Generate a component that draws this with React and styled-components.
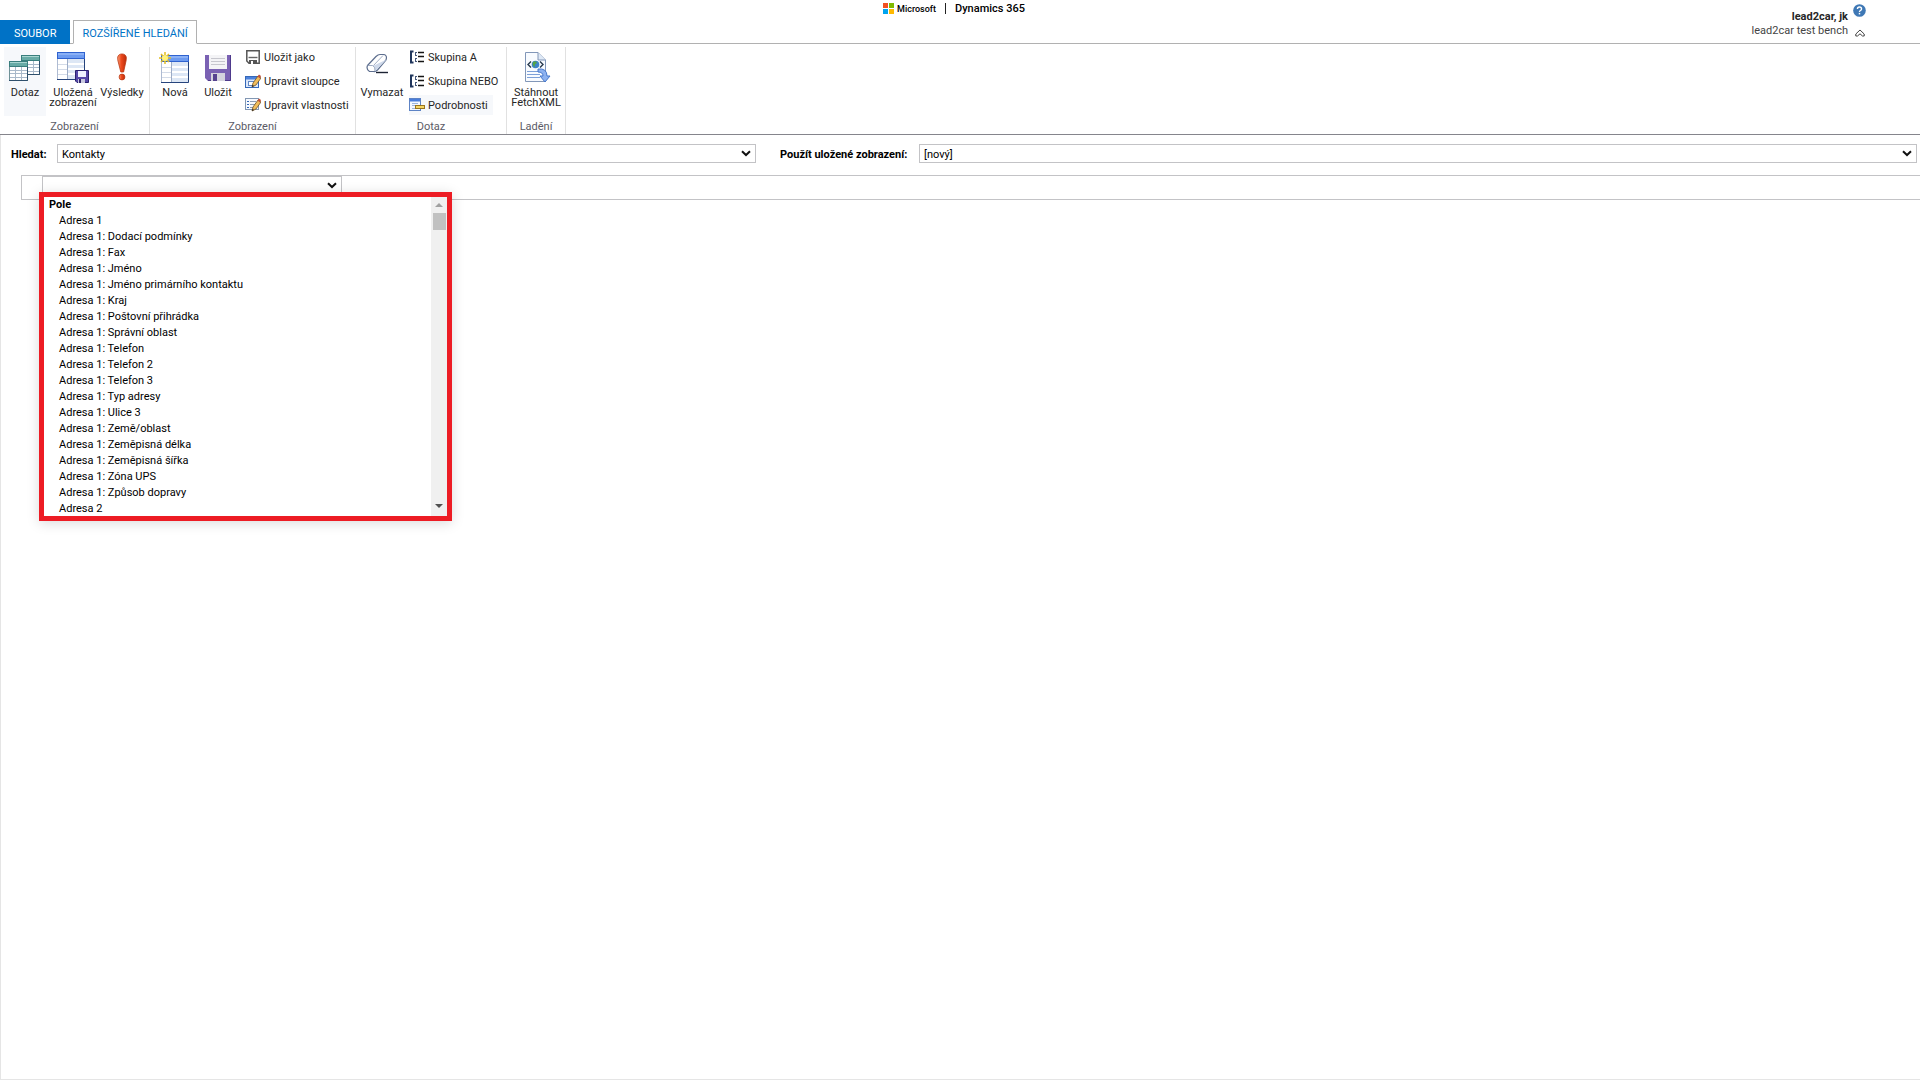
import React from "react";
import styled, { createGlobalStyle, css } from "styled-components";

const GlobalStyle = createGlobalStyle`
  *, *::before, *::after { box-sizing: border-box; }
  html, body, #root { height: 100%; }
  body {
    margin: 0;
    background: #fff;
    color: #000;
    font-family: Roboto, "Open Sans", sans-serif;
    font-size: 11px;
    line-height: 16px;
  }
  button, select { font: inherit; color: inherit; }
`;

const Page = styled.div`
  display: flex;
  flex-direction: column;
  min-height: 100%;
`;

const TopBar = styled.header`
  display: grid;
  grid-template-columns: 1fr auto 1fr;
  height: 44px;
  border-bottom: 1px solid #b1b1b1;
`;

const Tabs = styled.nav`
  display: flex;
  align-items: flex-end;
  gap: 3px;
  margin-bottom: -1px;
`;

const Tab = styled.button`
  height: 24px;
  padding: 4px 8px 0;
  border: 1px solid #b1b1b1;
  border-bottom-color: #fff;
  background: #fff;
  color: #0072c6;
  white-space: nowrap;
  ${(p) =>
    p.$primary &&
    css`
      padding: 3px 13px 0;
      border-color: #0072c6;
      background: #0072c6;
      color: #fff;
    `}
`;

const Brand = styled.div`
  display: flex;
  align-items: center;
  height: 17px;
  margin-right: 12px;
  white-space: nowrap;
`;

const Company = styled.span`
  margin-left: 3px;
  font-size: 9px;
  font-weight: 500;
`;

const Divider = styled.span`
  width: 1px;
  height: 11px;
  margin: 0 9px;
  background: #222;
`;

const Product = styled.span`
  font-weight: 500;
`;

const Account = styled.div`
  display: flex;
  justify-content: flex-end;
  gap: 5px;
  padding-right: 54px;
`;

const Identity = styled.div`
  padding-top: 10px;
  text-align: right;
  line-height: 14px;
  color: #444;
`;

const UserName = styled.div`
  font-weight: 700;
  color: #262626;
`;

const AccountActions = styled.div`
  display: flex;
  flex-direction: column;
  align-items: center;
  gap: 12px;
  padding-top: 4px;
`;

const IconButton = styled.button`
  display: flex;
  padding: 0;
  border: 0;
  background: none;
`;

const Ribbon = styled.div`
  display: flex;
  height: 91px;
  border-bottom: 1px solid #85858c;
`;

const Group = styled.section`
  display: flex;
  flex-direction: column;
  align-items: center;
  justify-content: space-between;
  flex: none;
  width: ${(p) => p.$width}px;
  margin-top: 3px;
  border-right: 1px solid #e1e1e1;
`;

const Commands = styled.div`
  display: flex;
  width: 100%;
  padding-left: 4px;
`;

const GroupName = styled.div`
  height: 16px;
  line-height: 18px;
  color: #5b5b66;
`;

const BigButton = styled.button`
  display: flex;
  flex-direction: column;
  align-items: center;
  flex: none;
  width: ${(p) => p.$width}px;
  height: 69px;
  padding: 4px 0 0;
  border: 0;
  background: ${(p) => (p.$active ? "#f6f8fb" : "none")};
  color: #262626;
  line-height: 10px;
  white-space: nowrap;

  svg { margin-bottom: 5px; flex: none; }
`;

const SmallList = styled.div`
  display: flex;
  flex-direction: column;
  align-items: flex-start;
  gap: 4px;
  padding-left: ${(p) => p.$indent}px;
`;

const SmallButton = styled.button`
  display: flex;
  align-items: center;
  gap: 3px;
  height: 20px;
  padding: 0 5px 0 0;
  border: 0;
  background: ${(p) => (p.$active ? "#f6f8fb" : "none")};
  color: #262626;
  line-height: 20px;
  white-space: nowrap;

  span { padding-top: 2px; }
`;

const Content = styled.main`
  flex: 1;
  padding-top: 9px;
  border-left: 1px solid #e5e5e5;
  border-bottom: 1px solid #e5e5e5;
`;

const Filters = styled.div`
  display: grid;
  grid-template-columns: 46px 699fr 24px 139px 998fr;
  align-items: center;
  padding: 0 3px 0 10px;
`;

const FilterLabel = styled.label`
  grid-column: ${(p) => p.$column};
  padding-top: 2px;
  font-weight: 700;
  white-space: nowrap;
`;

const SelectBox = styled.div`
  position: relative;
  min-width: 0;

  svg { position: absolute; right: 5px; top: 6px; pointer-events: none; }
`;

const Select = styled.select`
  display: block;
  width: 100%;
  height: ${(p) => p.$height || 19}px;
  padding: 2px 24px 0 4px;
  border: 1px solid #c3c3c6;
  border-radius: 0;
  background: #fff;
  appearance: none;
  outline: none;
`;

const QueryRow = styled.div`
  display: flex;
  height: 25px;
  margin: 12px 0 0 20px;
  padding-left: 20px;
  border: 1px solid #c3c3c6;
  border-right: 0;
`;

const FieldPicker = styled.div`
  position: relative;
  width: 300px;
`;

const Popup = styled.div`
  position: absolute;
  top: 16px;
  left: -3px;
  display: flex;
  width: 413px;
  height: 329px;
  border: 5px solid #ed1c24;
  background: #fff;
  box-shadow: 0 2px 12px rgba(0, 0, 0, 0.15);
`;

const Options = styled.ul`
  flex: 1;
  margin: 0;
  padding: 0 0 0 5px;
  overflow: hidden;
  list-style: none;
  white-space: nowrap;
`;

const OptionGroup = styled.li`
  height: 16px;
  font-weight: 700;
`;

const Option = styled.li`
  height: 16px;
  padding-left: 10px;
`;

const ScrollTrack = styled.div`
  display: flex;
  flex-direction: column;
  align-items: center;
  width: 16px;
  padding: 5px 0 7px;
  background: #f0f0f0;
`;

const ScrollThumb = styled.div`
  width: 13px;
  height: 17px;
  margin: 6px 0 auto;
  background: #c1c1c1;
`;

const Chevron = () => (
  <svg width="10" height="7" viewBox="0 0 10 7">
    <path d="M1 1.2 5 5 9 1.2" fill="none" stroke="#111" strokeWidth="2" />
  </svg>
);

const Table = ({ x, y, w, h }) => {
  const col = Math.round(w * 0.36) + 0.5;
  return (
    <g transform={`translate(${x} ${y})`}>
      <rect width={w} height={h} fill="#fff" />
      <path d={`M${col} 7H${w}V${h}H${col}z`} fill="#dde7f5" />
      <path d={`M1 12H${w}M1 17H${w}M1 22H${w}`} stroke="#fff" strokeWidth="2" />
      <path d={`M1 12.5H${col}M1 17.5H${col}M1 22.500H${col}`} stroke="#d3dbe8" />
      <rect x=".5" y=".5" width={w - 1} height="6" fill="#6d9bf0" stroke="#2f62cf" />
      <path d={`M1 2H${w - 1}`} stroke="#a9c6fb" />
      <path d={`M${col} 7V${h}`} stroke="#9dacc6" />
      <path d={`M.5 7V${h - 0.5}`} stroke="#aebbd2" />
      <path d={`M0 ${h - 0.5}H${w - 0.5}V7`} fill="none" stroke="#26447c" />
    </g>
  );
};

const Grid = ({ x, y }) => (
  <g transform={`translate(${x} ${y})`}>
    <rect x=".5" y=".5" width="18" height="19" fill="#fff" stroke="#6f9297" />
    <rect x=".5" y=".5" width="18" height="5" fill="#68aba6" stroke="#397e7d" />
    <path d="M1 1.5H18" stroke="#a9d6d1" />
    <path d="M1 9.5H18M1 12.5H18M1 16.5H18M6.5 6V19M12.5 6V19" stroke="#a9b9ca" />
    <path d="M0 19.5H18.5V6" fill="none" stroke="#2f506c" />
  </g>
);

const QueryIcon = () => (
  <svg width="32" height="32"><Grid x={12} y={4} /><Grid x={0} y={10} /></svg>
);

const SavedViewsIcon = () => (
  <svg width="32" height="32">
    <Table x={0} y={1} w={28} h={28} />
    <path d="M18.500 19.500H31.500V31.500H20L18.500 30z" fill="#5547a8" stroke="#29206f" />
    <rect x="21" y="20" width="8" height="6" fill="#eef0ff" />
    <rect x="21" y="28" width="7" height="4" fill="#c9c8df" />
    <rect x="22" y="28" width="2" height="4" fill="#30266d" />
  </svg>
);

const ResultsIcon = () => (
  <svg width="32" height="32">
    <defs>
      <linearGradient id="alert" x1="0" x2="1">
        <stop offset="0" stopColor="#f9a27b" /><stop offset=".4" stopColor="#ef4a1d" /><stop offset="1" stopColor="#b92c0a" />
      </linearGradient>
    </defs>
    <path d="M16 3C20 3 21 6 20 10L17.6 21H14.8L12 10C11 6 12 3 16 3z" fill="url(#alert)" stroke="#bb3610" strokeWidth=".8" />
    <circle cx="16" cy="26" r="2.9" fill="url(#alert)" stroke="#bb3610" strokeWidth=".8" />
  </svg>
);

const NewIcon = () => (
  <svg width="32" height="32">
    <Table x={2} y={4} w={28} h={28} />
    <path d="M6 1V13M0 7H12M2 3 10 11M10 3 2 11" stroke="#e4be25" strokeWidth="1.5" />
    <circle cx="6" cy="7" r="3" fill="#fff27a" />
  </svg>
);

const SaveIcon = () => (
  <svg width="32" height="32">
    <path d="M3 4H29V30H6L3 27V4z" fill="#7a61b3" />
    <path d="M28.500 4V29.500H6" fill="none" stroke="#4e3a8c" />
    <rect x="7" y="4" width="18" height="14" fill="#f4f4f6" />
    <path d="M9 7.500H23M9 10.500H23M9 13.500H23" stroke="#c7c7ce" />
    <rect x="9" y="22" width="14" height="8" fill="#d4d2de" />
    <rect x="11" y="23" width="4" height="7" fill="#56418f" />
  </svg>
);

const ClearIcon = () => (
  <svg width="32" height="32">
    <path d="M10 21.500H22" stroke="#1c2333" strokeWidth="1.400" />
    <path d="M1.500 14.500 10 5.500Q12 3.500 14 3.500H18Q21.500 4.500 20 9L11.500 19Q9.500 21 7.500 20.500H3.500Q0 18.500 1.500 14.500z" fill="#fff" stroke="#5d6e8e" strokeWidth="1.200" />
    <path d="M1.500 14.800H6.500Q9.500 15.500 9 20.500L20.500 8.500 8 14.500z" fill="#cfd9ea" />
    <path d="M1.500 14.500H6.500Q9.500 15.500 9 20.500M7.500 14.500 17 4.500" fill="none" stroke="#8c9ab5" strokeWidth=".8" />
  </svg>
);

const FetchIcon = () => (
  <svg width="32" height="32">
    <path d="M5.500 1.500H18L25.500 9V30.500H5.500z" fill="#f8fbff" stroke="#8297b8" />
    <path d="M18 1.500V9H25.500" fill="#dfe9f6" stroke="#8297b8" />
    <path d="M11 10.500 8 13.500 11 16.500M20 10.500 23 13.500 20 16.500" fill="none" stroke="#27394d" strokeWidth="1.4" />
    <circle cx="15.500" cy="13.500" r="3.800" fill="#3e83c9" />
    <path d="M13 11Q16 9 17 12Q14 13 15 16Q12 15 13 11z" fill="#54a447" />
    <path d="M7 20.500H20M7 23.500H20M7 26.500H20" stroke="#7da0d8" />
    <path d="M18 18Q27 17 27 25H30L25 31 20 25H23Q23 21 18 21z" fill="#8db2f0" stroke="#4577cc" />
  </svg>
);

const SaveAsIcon = () => (
  <svg width="16" height="16">
    <path d="M2 1.800H14.200V14.200H4L1.800 12V1.800z" fill="#fff" stroke="#555" strokeWidth="1.500" />
    <path d="M3.500 8.500H12.500" fill="none" stroke="#666" strokeWidth="1.400" />
    <path d="M4 14.500V11H12V14.500z" fill="#555" /><rect x="6" y="12" width="2" height="3" fill="#fff" />
  </svg>
);

const Pencil = () => (
  <g>
    <path d="M7 14 8 10 13 3 16 5 11 12z" fill="#f1bd5b" stroke="#705328" strokeWidth=".8" />
    <path d="M12.500 3.500 14 1.500 16 3 15 5.500z" fill="#c2533b" />
    <path d="M7 14 7.600 11.800 9 13z" fill="#222" />
  </g>
);

const EditColumnsIcon = () => (
  <svg width="16" height="16">
    <rect x=".5" y="3.500" width="13" height="11" fill="#dbe7fa" stroke="#3568b8" />
    <rect x="1" y="4" width="12" height="2.500" fill="#4c82dc" />
    <rect x="3.500" y="8.500" width="6" height="4" fill="#fff" stroke="#6188c6" />
    <Pencil />
  </svg>
);

const EditPropsIcon = () => (
  <svg width="16" height="16">
    <rect x=".5" y="1.500" width="13" height="11" fill="#f7faff" stroke="#8297b3" />
    <path d="M5 4.500H11M5 7.500H10M5 10.500H8" stroke="#8e9eb5" />
    <path d="M2 4.500H4M2 7.500H4M2 10.500H4" stroke="#3568b8" />
    <Pencil />
  </svg>
);

const GroupIcon = () => (
  <svg width="16" height="16">
    <path d="M4.500 2.500H2V13.500H4.500" fill="none" stroke="#20365c" strokeWidth="2" />
    <path d="M6.500 3V6.500M8 3.500H6M8 6.500H6M6.500 9V13M8 9.500H6M8 12.500H6" stroke="#46587a" />
    <path d="M9 3.500H15M9 7.500H15M9 12.500H15" stroke="#151515" strokeWidth="1.400" />
  </svg>
);

const DetailsIcon = () => (
  <svg width="16" height="16">
    <rect x=".5" y="1.500" width="11" height="12" fill="#f4f8ff" stroke="#5d83c5" />
    <rect x="1" y="2" width="10" height="2.500" fill="#4a7edb" />
    <path d="M3 6.500H9M3 8.500H7M3 11.500H7" stroke="#9cb5dc" />
    <rect x="6.500" y="8.500" width="9" height="3" fill="#f4d665" stroke="#98741e" />
  </svg>
);

const Small = ({ icon, label, active }) => (
  <SmallButton $active={active}>
    {icon}
    <span>{label}</span>
  </SmallButton>
);

const FIELDS = [
  "Adresa 1", "Adresa 1: Dodací podmínky", "Adresa 1: Fax", "Adresa 1: Jméno",
  "Adresa 1: Jméno primárního kontaktu", "Adresa 1: Kraj", "Adresa 1: Poštovní přihrádka",
  "Adresa 1: Správní oblast", "Adresa 1: Telefon", "Adresa 1: Telefon 2", "Adresa 1: Telefon 3",
  "Adresa 1: Typ adresy", "Adresa 1: Ulice 3", "Adresa 1: Země/oblast", "Adresa 1: Zeměpisná délka",
  "Adresa 1: Zeměpisná šířka", "Adresa 1: Zóna UPS", "Adresa 1: Způsob dopravy", "Adresa 2",
];

export default function App() {
  return (
    <Page>
      <GlobalStyle />
      <TopBar>
        <Tabs>
          <Tab $primary>SOUBOR</Tab>
          <Tab>ROZŠÍŘENÉ HLEDÁNÍ</Tab>
        </Tabs>
        <Brand>
          <svg width="11" height="11">
            <path d="M0 0H5V5H0z" fill="#f25022" /><path d="M6 0H11V5H6z" fill="#7fba00" />
            <path d="M0 6H5V11H0z" fill="#00a4ef" /><path d="M6 6H11V11H6z" fill="#ffb900" />
          </svg>
          <Company>Microsoft</Company>
          <Divider />
          <Product>Dynamics 365</Product>
        </Brand>
        <Account>
          <Identity>
            <UserName>lead2car, jk</UserName>
            <div>lead2car test bench</div>
          </Identity>
          <AccountActions>
            <IconButton aria-label="Nápověda">
              <svg width="13" height="13" viewBox="0 0 14 14">
                <circle cx="7" cy="7" r="6.800" fill="#3f78b5" />
                <path d="M4.800 5.500Q4.800 3.300 7 3.300T9.200 5.300Q9.200 6.300 8 7T7 8.600" fill="none" stroke="#fff" strokeWidth="1.500" />
                <rect x="6.200" y="9.600" width="1.600" height="1.600" fill="#fff" />
              </svg>
            </IconButton>
            <IconButton aria-label="Sbalit pás karet">
              <svg width="10" height="8">
                <path d="M.8 5 5 1 9.200 5V7H7.500L5 4.800 2.500 7H.8z" fill="#fff" stroke="#444" />
              </svg>
            </IconButton>
          </AccountActions>
        </Account>
      </TopBar>

      <Ribbon>
        <Group $width={150}>
          <Commands>
            <BigButton $width={42} $active><QueryIcon />Dotaz</BigButton>
            <BigButton $width={54}><SavedViewsIcon />Uložená<br />zobrazení</BigButton>
            <BigButton $width={44}><ResultsIcon />Výsledky</BigButton>
          </Commands>
          <GroupName>Zobrazení</GroupName>
        </Group>
        <Group $width={206}>
          <Commands>
            <BigButton $width={42}><NewIcon />Nová</BigButton>
            <BigButton $width={44}><SaveIcon />Uložit</BigButton>
            <SmallList $indent={5}>
              <Small icon={<SaveAsIcon />} label="Uložit jako" />
              <Small icon={<EditColumnsIcon />} label="Upravit sloupce" />
              <Small icon={<EditPropsIcon />} label="Upravit vlastnosti" />
            </SmallList>
          </Commands>
          <GroupName>Zobrazení</GroupName>
        </Group>
        <Group $width={151}>
          <Commands>
            <BigButton $width={44}><ClearIcon />Vymazat</BigButton>
            <SmallList $indent={5}>
              <Small icon={<GroupIcon />} label="Skupina A" />
              <Small icon={<GroupIcon />} label="Skupina NEBO" />
              <Small icon={<DetailsIcon />} label="Podrobnosti" active />
            </SmallList>
          </Commands>
          <GroupName>Dotaz</GroupName>
        </Group>
        <Group $width={59}>
          <Commands>
            <BigButton $width={50}><FetchIcon />Stáhnout<br />FetchXML</BigButton>
          </Commands>
          <GroupName>Ladění</GroupName>
        </Group>
      </Ribbon>

      <Content>
        <Filters>
          <FilterLabel $column={1} htmlFor="entity">Hledat:</FilterLabel>
          <SelectBox>
            <Select id="entity"><option>Kontakty</option></Select>
            <Chevron />
          </SelectBox>
          <FilterLabel $column={4} htmlFor="view">Použít uložené zobrazení:</FilterLabel>
          <SelectBox>
            <Select id="view"><option>[nový]</option></Select>
            <Chevron />
          </SelectBox>
        </Filters>
        <QueryRow>
          <FieldPicker>
            <SelectBox>
              <Select aria-label="Pole" $height={23}><option></option></Select>
              <Chevron />
            </SelectBox>
            <Popup>
              <Options role="listbox" aria-label="Pole">
                <OptionGroup role="presentation">Pole</OptionGroup>
                {FIELDS.map((name) => (
                  <Option key={name} role="option">{name}</Option>
                ))}
              </Options>
              <ScrollTrack aria-hidden="true">
                <svg width="8" height="5"><path d="M0 5 4 1 8 5z" fill="#a0a0a0" /></svg>
                <ScrollThumb />
                <svg width="8" height="5"><path d="M0 0 4 4 8 0z" fill="#505050" /></svg>
              </ScrollTrack>
            </Popup>
          </FieldPicker>
        </QueryRow>
      </Content>
    </Page>
  );
}
